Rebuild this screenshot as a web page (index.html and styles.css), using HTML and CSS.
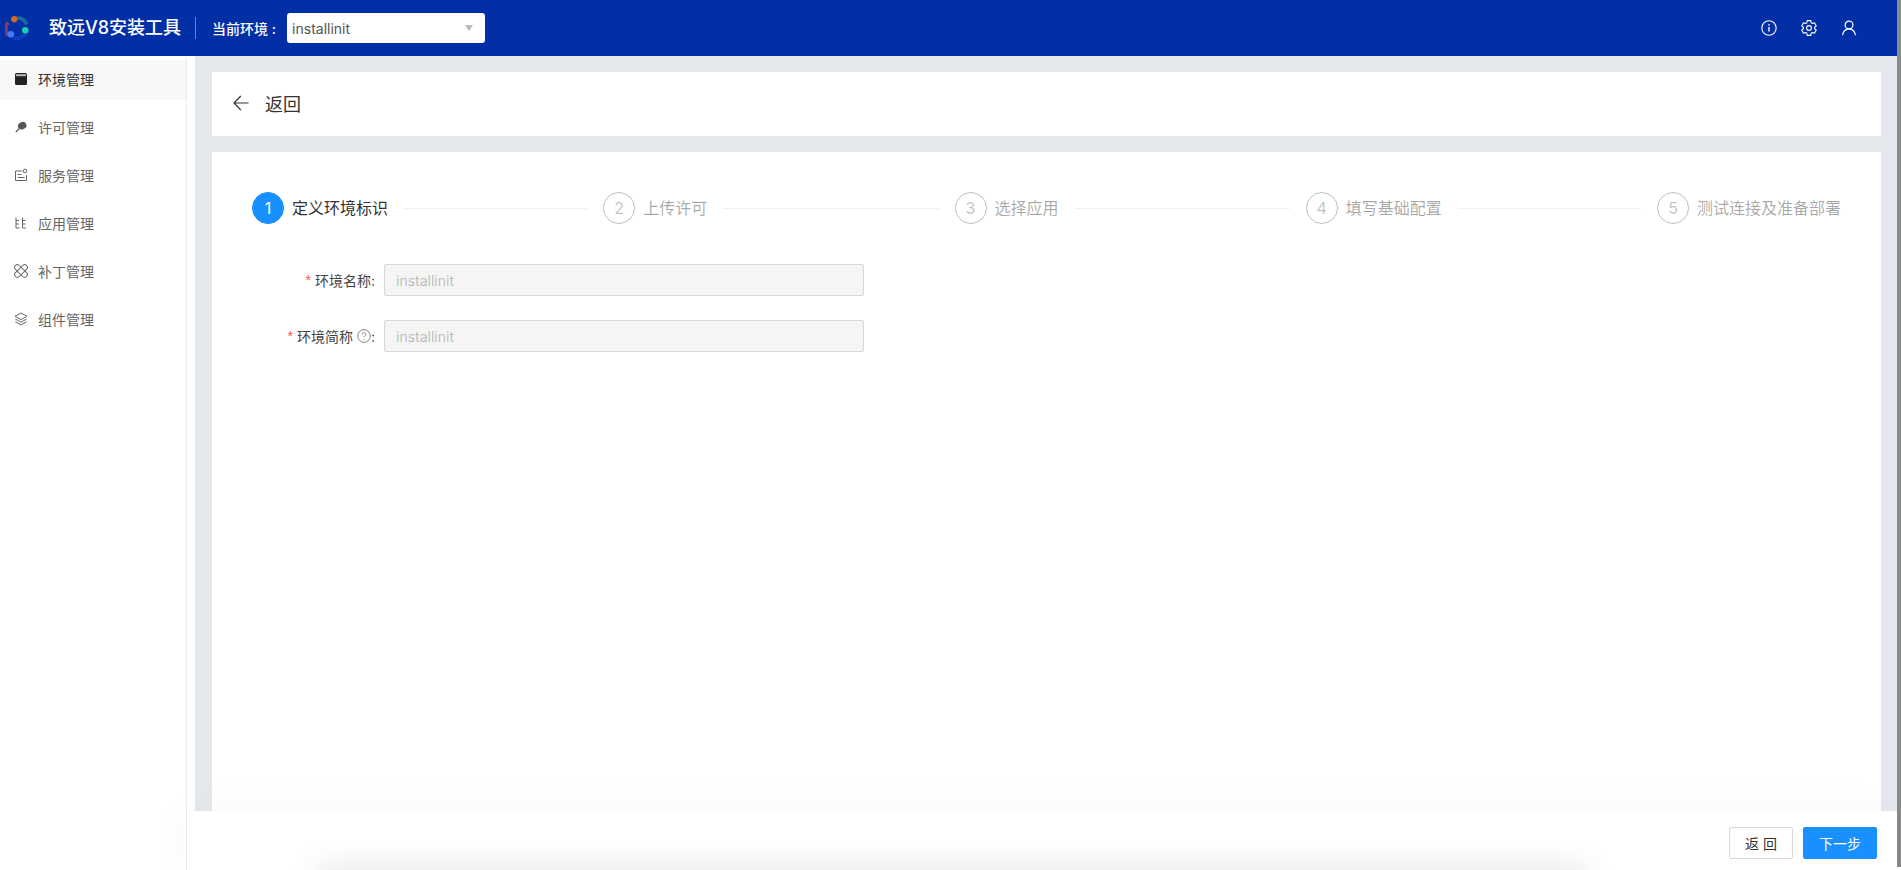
FILE: index.html
```html
<!DOCTYPE html>
<html lang="zh-CN">
<head>
<meta charset="utf-8">
<title>致远V8安装工具</title>
<link rel="stylesheet" href="styles.css">
</head>
<body>
<div class="page">
  <div class="app">
    <header class="topbar">
      <svg class="logo" width="24" height="24" viewBox="0 0 24 24" fill="none">
        <path d="M3 19.5A10.2 10.2 0 0 1 3.2 6.5" stroke="#7a3f6e" stroke-width="3.6"/>
        <path d="M12 1.9A10.2 10.2 0 0 1 21.6 8.5" stroke="#1a6a9c" stroke-width="3.6"/>
        <path d="M21.4 16.5A10.2 10.2 0 0 1 8 21.4" stroke="#0f3fc0" stroke-width="3.6"/>
        <circle cx="9.3" cy="3.2" r="3.1" fill="#d2672a"/>
        <circle cx="20.3" cy="14.2" r="3.2" fill="#14d3ae"/>
        <circle cx="5.8" cy="18.2" r="3.3" fill="#3f7cf5"/>
      </svg>
      <span class="brand">致远V8安装工具</span>
      <span class="divider"></span>
      <span class="env-label">当前环境 :</span>
      <div class="env-select">
        <span>installinit</span>
        <i class="caret"></i>
      </div>
      <div class="top-icons">
        <svg width="16" height="16" viewBox="0 0 16 16" fill="none" stroke="#fff" stroke-width="1.1">
          <circle cx="8" cy="8" r="7.2"/>
          <path d="M8 7v4.6" stroke-width="1.4"/>
          <circle cx="8" cy="4.9" r=".8" fill="#fff" stroke="none"/>
        </svg>
        <svg width="16" height="16" viewBox="0 0 16 16" fill="none" stroke="#fff" stroke-width="1.1" stroke-linejoin="round">
          <path d="M6.16.63H9.84L10.14 2.72 11.51 3.51 13.47 2.72 15.31 5.91 13.64 7.21V8.79L15.31 10.09 13.47 13.28 11.51 12.49 10.14 13.28 9.84 15.37H6.16L5.86 13.28 4.49 12.49 2.53 13.28.69 10.09 2.36 8.79V7.21L.69 5.91 2.53 2.72 4.49 3.51 5.86 2.72Z"/>
          <circle cx="8" cy="8" r="2.4"/>
        </svg>
        <svg width="16" height="16" viewBox="0 0 16 16" fill="none" stroke="#fff" stroke-width="1.2">
          <circle cx="8" cy="5" r="3.9"/>
          <path d="M1.5 15.3c.3-3.6 3-6.4 6.5-6.4s6.2 2.8 6.5 6.4"/>
        </svg>
      </div>
    </header>
    <div class="body-row">
      <nav class="sidebar">
        <a class="nav-item active">
          <svg width="14" height="14" viewBox="0 0 14 14"><rect x="1" y="1" width="12" height="12" rx="1.5" fill="#222"/><rect x="2" y="2.2" width="10" height="2" fill="#bbb"/></svg>
          <span>环境管理</span>
        </a>
        <a class="nav-item">
          <svg width="14" height="14" viewBox="0 0 14 14"><ellipse cx="8.2" cy="5.7" rx="4.3" ry="3.6" transform="rotate(-25 8.2 5.7)" fill="#555"/><path d="M5.2 8.5 1.8 12" stroke="#555" stroke-width="1.2" fill="none"/></svg>
          <span>许可管理</span>
        </a>
        <a class="nav-item">
          <svg width="14" height="14" viewBox="0 0 14 14" fill="none" stroke="#666" stroke-width="1"><path d="M8 3H1.5v9.5h11V7"/><path d="M3.5 6.5h4M3.5 9.5h7"/><circle cx="11" cy="3" r="1.8"/></svg>
          <span>服务管理</span>
        </a>
        <a class="nav-item">
          <svg width="14" height="14" viewBox="0 0 14 14" fill="none" stroke="#666" stroke-width="1"><path d="M2 1.5V12h3.5M2 4.5h3M2 8h3"/><path d="M8.5 1.5V12H12M8.5 4.5h3M8.500 8h3"/></svg>
          <span>应用管理</span>
        </a>
        <a class="nav-item">
          <svg width="14" height="14" viewBox="0 0 14 14" fill="none" stroke="#666" stroke-width="1"><rect x="-.8" y="4.3" width="15.6" height="5.4" rx="2.7" transform="rotate(45 7 7)"/><rect x="-.8" y="4.3" width="15.6" height="5.4" rx="2.7" transform="rotate(-45 7 7)"/></svg>
          <span>补丁管理</span>
        </a>
        <a class="nav-item">
          <svg width="14" height="14" viewBox="0 0 14 14" fill="none" stroke="#666" stroke-width="1" stroke-linejoin="round"><path d="M7 1 13 4.3 7 7.6 1 4.3z"/><path d="M1.3 7 7 10.2 12.7 7"/><path d="M1.3 9.7 7 12.9 12.7 9.7"/></svg>
          <span>组件管理</span>
        </a>
      </nav>
      <main class="main">
        <div class="content">
          <section class="back-card">
            <svg width="16" height="16" viewBox="0 0 16 16" fill="none" stroke="#333" stroke-width="1.2"><path d="M15.5 8H1M7.8 1 1 8l6.8 7"/></svg>
            <span class="back-title">返回</span>
          </section>
          <section class="form-card">
            <ol class="steps">
              <li class="step current"><span class="step-num">1</span><span class="step-title">定义环境标识</span><span class="step-line"></span></li>
              <li class="step"><span class="step-num">2</span><span class="step-title">上传许可</span><span class="step-line"></span></li>
              <li class="step"><span class="step-num">3</span><span class="step-title">选择应用</span><span class="step-line"></span></li>
              <li class="step"><span class="step-num">4</span><span class="step-title">填写基础配置</span><span class="step-line"></span></li>
              <li class="step last"><span class="step-num">5</span><span class="step-title">测试连接及准备部署</span></li>
            </ol>
            <form class="env-form">
              <div class="field">
                <label class="field-label"><b>*</b>环境名称<em>:</em></label>
                <input class="field-input" value="installinit" disabled>
              </div>
              <div class="field">
                <label class="field-label"><b>*</b>环境简称
                  <svg class="help" width="14" height="14" viewBox="0 0 14 14" fill="none" stroke="#777" stroke-width=".9"><circle cx="7" cy="7" r="6.3"/><path d="M5.1 5.5c0-1.100.8-1.800 1.900-1.800s1.900.7 1.900 1.700c0 1.500-1.900 1.500-1.900 3"/><circle cx="7" cy="10.2" r=".5" fill="#777" stroke="none"/></svg><em>:</em></label>
                <input class="field-input" value="installinit" disabled>
              </div>
            </form>
          </section>
        </div>
        <footer class="footer">
          <button class="btn" type="button">返 回</button>
          <button class="btn primary" type="button">下一步</button>
        </footer>
      </main>
    </div>
  </div>
  <div class="scroll-strip"></div>
</div>
</body>
</html>
```
FILE: styles.css
```css
* { box-sizing: border-box; }
html, body { margin: 0; height: 100%; overflow: hidden; }
body {
  background: #fff;
  font-family: Inter, "Noto Sans CJK SC", sans-serif;
  font-size: 14px;
  color: #333;
}
.page { display: flex; height: 870px; }
.app { flex: 1; min-width: 0; display: flex; flex-direction: column; }
.scroll-strip { width: 4px; height: 867px; background: #8a8a8a; }

.topbar {
  height: 56px;
  flex: none;
  display: flex;
  align-items: center;
  background: #022fa6;
  color: #fff;
  padding-left: 5px;
}
.logo { flex: none; }
.brand { margin-left: 20px; font-size: 18px; font-weight: 500; line-height: 24px; white-space: nowrap; }
.divider { width: 1px; height: 22px; margin: 0 16px 0 14px; background: rgba(255,255,255,.4); }
.env-label { width: 75px; font-weight: 500; white-space: nowrap; }
.env-select {
  width: 198px;
  height: 30px;
  display: flex;
  align-items: center;
  justify-content: space-between;
  padding: 0 12px 0 5px;
  background: #fff;
  border-radius: 3px;
  color: #555;
}
.caret { width: 0; height: 0; border: 4px solid transparent; border-top: 6px solid #bbb; border-bottom: 0; }
.top-icons { margin-left: auto; margin-right: 40px; display: flex; gap: 24px; }

.body-row { flex: 1; min-height: 0; display: flex; }
.sidebar {
  width: 187px;
  flex: none;
  padding-top: 4px;
  border-right: 1px solid #ececec;
  background: #fff;
}
.nav-item {
  height: 40px;
  margin-bottom: 8px;
  display: flex;
  align-items: center;
  gap: 10px;
  padding: 0 0 2px 14px;
  color: #666;
  border-radius: 0 4px 4px 0;
}
.nav-item.active { background: #f7f7f7; color: #333; }

.main { flex: 1; min-width: 0; display: flex; flex-direction: column; }
.content {
  flex: 1;
  min-height: 0;
  margin-left: 8px;
  padding: 16px 16px 0 17px;
  display: flex;
  flex-direction: column;
  gap: 16px;
  background: #e5e8ed;
}
.back-card {
  height: 64px;
  flex: none;
  display: flex;
  align-items: center;
  gap: 16px;
  padding: 0 0 2px 21px;
  background: #fff;
}
.back-title { font-size: 18px; color: #333; }
.form-card { flex: 1; background: #fff; padding: 40px; }

.steps { list-style: none; margin: 0; padding: 0; display: flex; gap: 16px; }
.step { flex: 1 1 0; min-width: 0; display: flex; align-items: center; color: rgba(0,0,0,.35); white-space: nowrap; }
.step.last { flex: none; }
.step-num {
  width: 32px;
  height: 32px;
  flex: none;
  display: flex;
  align-items: center;
  justify-content: center;
  margin-right: 8px;
  border: 1px solid rgba(0,0,0,.25);
  border-radius: 50%;
  font-size: 16px;
  color: rgba(0,0,0,.25);
}
.step-title { font-size: 16px; line-height: 32px; }
.step-line { flex: 1; height: 1px; margin-left: 16px; background: #f0f0f0; }
.step.current { color: #333; }
.step.current .step-num { background: #1890ff; border-color: #1890ff; color: #fff; }

.env-form { margin-top: 40px; display: flex; flex-direction: column; gap: 24px; }
.field { display: flex; align-items: center; }
.field-label {
  width: 132px;
  display: flex;
  align-items: center;
  justify-content: flex-end;
  padding-right: 8px;
  color: #444;
  white-space: nowrap;
}
.field-label b { margin-right: 4px; font-weight: 400; color: #ff4d4f; font-family: "Liberation Sans", sans-serif; }
.field-label em { width: 5px; font-style: normal; }
.help { margin-left: 4px; }
.field-input {
  width: 480px;
  height: 32px;
  padding: 0 11px;
  border: 1px solid #d9d9d9;
  border-radius: 2px;
  background: #f5f5f5;
  font: inherit;
  color: rgba(0,0,0,.25);
}

.footer {
  height: 59px;
  flex: none;
  position: relative;
  z-index: 1;
  display: flex;
  align-items: center;
  justify-content: flex-end;
  gap: 10px;
  padding: 5px 20px 0 0;
  background: #fff;
  box-shadow: 0 0 48px rgba(0,0,0,.035);
}
.footer::after {
  content: "";
  position: absolute;
  left: 130px;
  width: 1270px;
  top: 59px;
  height: 20px;
  box-shadow: 0 0 32px rgba(0,0,0,.14);
}
.btn {
  height: 32px;
  padding: 0;
  border: 1px solid #d9d9d9;
  border-radius: 2px;
  background: #fff;
  color: #333;
  font: inherit;
  width: 64px;
}
.btn.primary { width: 74px; background: #1890ff; border-color: #1890ff; color: #fff; }
```
